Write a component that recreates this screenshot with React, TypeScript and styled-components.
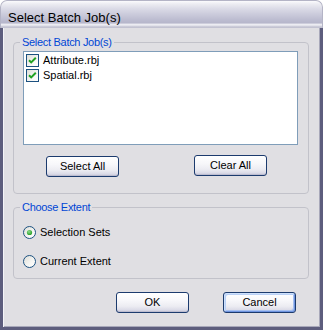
import React from "react";
import styled, { createGlobalStyle } from "styled-components";

const Global = createGlobalStyle`
  html, body { margin: 0; padding: 0; background: #ffffff; }
  body { font-family: "Liberation Sans", Arial, sans-serif; }
  * { box-sizing: border-box; }
`;

const Window = styled.div`
  width: 323px;
  height: 330px;
  display: flex;
  flex-direction: column;
  border-radius: 7px 7px 0 0;
  overflow: hidden;
  background: #e0dfe3;
`;

const TitleBar = styled.div`
  flex: none;
  height: 28px;
  padding: 9px 0 0 7px;
  font-size: 13px;
  line-height: 15px;
  color: #000;
  border: 1px solid #b4b4c6;
  border-bottom: none;
  border-radius: 7px 7px 0 0;
  background: linear-gradient(
    180deg,
    #fbfbfd 0px,
    #ececf2 3px,
    #dadae6 8px,
    #c9c9da 14px,
    #bcbcd0 19px,
    #b6b6cb 22px,
    #e4e4ec 23px,
    #f4f4f8 24px,
    #d0d0dc 25px,
    #bdbdcd 27px
  );
`;

const Body = styled.div`
  flex: 1;
  display: flex;
  flex-direction: column;
  padding: 8px 11px 0 10px;
  border-style: solid;
  border-color: #5d5d7d;
  border-width: 0 3px 3px 3px;
  box-shadow: inset 1px 0 0 #f4f4f8, inset -1px 0 0 #a8a8ba, inset 0 -1px 0 #a8a8ba;
`;

const Group = styled.fieldset<{ $pt: number; $pb: number; $mt?: number }>`
  margin: ${(p) => p.$mt ?? 0}px 0 0 0;
  min-width: 0;
  border: 1px solid #c2c2ca;
  border-radius: 4px;
  padding: ${(p) => p.$pt}px 10px ${(p) => p.$pb}px 9px;
`;

const Legend = styled.legend`
  margin-left: -3px;
  padding: 0 2px;
  font-size: 11px;
  line-height: 13px;
  letter-spacing: -0.3px;
  color: #0046d5;
`;

const List = styled.div`
  height: 94px;
  border: 1px solid #7f9db9;
  background: #ffffff;
  padding: 1px 2px;
  display: flex;
  flex-direction: column;
`;

const Item = styled.div`
  height: 15px;
  display: flex;
  align-items: center;
  gap: 4px;
  font-size: 11px;
  line-height: 15px;
  color: #000;
`;

const ButtonRow = styled.div`
  display: flex;
  align-items: flex-start;
  margin-top: 11px;
  padding-left: 23px;
  gap: 75px;
`;

const Button = styled.button<{ $default?: boolean; $lift?: number }>`
  width: 73px;
  height: 21px;
  margin: ${(p) => -(p.$lift ?? 0)}px 0 0 0;
  padding: 0;
  font-family: "Liberation Sans", Arial, sans-serif;
  font-size: 11px;
  line-height: 19px;
  color: #000;
  border: 1px solid #1c3b6e;
  border-radius: 3px;
  background: linear-gradient(
    180deg,
    #ffffff 0%,
    #f7f7fa 40%,
    #ececf2 70%,
    #dcdce8 88%,
    #c6c6d8 100%
  );
  box-shadow: ${(p) =>
    p.$default
      ? "inset 1px 1px 0 #cde0fb, inset -1px -1px 0 #6f94e0, inset 2px 2px 0 #b9d0f6, inset -2px -2px 0 #a6c0f0"
      : "inset 0 -1px 0 #bdbdd0"};
`;

const RadioList = styled.div`
  display: flex;
  flex-direction: column;
  gap: 16px;
`;

const RadioRow = styled.div`
  height: 13px;
  display: flex;
  align-items: center;
  gap: 4px;
  font-size: 11px;
  line-height: 13px;
  color: #000;
`;

const Footer = styled.div`
  display: flex;
  justify-content: flex-end;
  gap: 34px;
  margin-top: 13px;
  padding-right: 13px;
`;

const Check = () => (
  <svg width="13" height="13" viewBox="0 0 13 13">
    <defs>
      <linearGradient id="cbg" x1="0" y1="0" x2="1" y2="1">
        <stop offset="0" stopColor="#dcdcd6" />
        <stop offset="0.6" stopColor="#f6f6f4" />
        <stop offset="1" stopColor="#ffffff" />
      </linearGradient>
    </defs>
    <rect x="0.5" y="0.5" width="12" height="12" fill="url(#cbg)" stroke="#1c5180" />
    <path d="M3 6.2 L5.2 8.4 L9.8 3.8" fill="none" stroke="#21a121" strokeWidth="2" />
  </svg>
);

const Radio = ({ checked }: { checked?: boolean }) => (
  <svg width="13" height="13" viewBox="0 0 13 13">
    <defs>
      <linearGradient id="rbg" x1="0" y1="0" x2="1" y2="1">
        <stop offset="0" stopColor="#dcdcd6" />
        <stop offset="0.6" stopColor="#f6f6f4" />
        <stop offset="1" stopColor="#ffffff" />
      </linearGradient>
      <radialGradient id="rdot" cx="0.4" cy="0.35" r="0.7">
        <stop offset="0" stopColor="#8cdc8c" />
        <stop offset="1" stopColor="#1e9a1e" />
      </radialGradient>
    </defs>
    <circle cx="6.5" cy="6.5" r="6" fill="url(#rbg)" stroke="#1c5180" />
    {checked && <circle cx="6.5" cy="6.5" r="2.6" fill="url(#rdot)" />}
  </svg>
);

export default function App() {
  return (
    <>
      <Global />
      <Window>
        <TitleBar>Select Batch Job(s)</TitleBar>
        <Body>
          <Group $pt={2} $pb={16}>
            <Legend>Select Batch Job(s)</Legend>
            <List>
              <Item>
                <Check />
                Attribute.rbj
              </Item>
              <Item>
                <Check />
                Spatial.rbj
              </Item>
            </List>
            <ButtonRow>
              <Button>Select All</Button>
              <Button $lift={1}>Clear All</Button>
            </ButtonRow>
          </Group>
          <Group $pt={12} $pb={10} $mt={7}>
            <Legend>Choose Extent</Legend>
            <RadioList>
              <RadioRow>
                <Radio checked />
                Selection Sets
              </RadioRow>
              <RadioRow>
                <Radio />
                Current Extent
              </RadioRow>
            </RadioList>
          </Group>
          <Footer>
            <Button>OK</Button>
            <Button $default>Cancel</Button>
          </Footer>
        </Body>
      </Window>
    </>
  );
}
